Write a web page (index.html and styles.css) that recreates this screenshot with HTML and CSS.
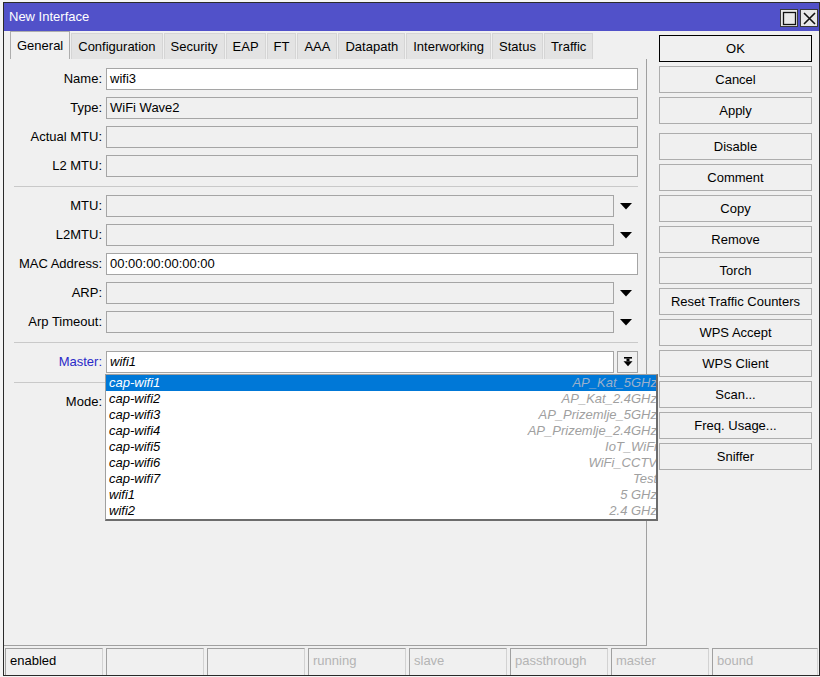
FILE: index.html
```html
<!DOCTYPE html>
<html lang="en">
<head>
  <meta charset="UTF-8">
  <title>New Interface</title>
  <link rel="stylesheet" href="styles.css">
</head>
<body>
  <div class="window">
    <div class="titlebar">
      <span class="title">New Interface</span>
      <div class="title-buttons">
        <span class="tbtn">
          <svg width="15" height="15" viewBox="0 0 15 15"><rect x="1.5" y="1.5" width="12" height="12" fill="none" stroke="#111" stroke-width="1.3"/></svg>
        </span>
        <span class="tbtn">
          <svg width="15" height="15" viewBox="0 0 15 15"><path d="M2 2 L13 13 M13 2 L2 13" stroke="#111" stroke-width="1.6"/></svg>
        </span>
      </div>
    </div>

    <div class="content">
      <div class="main">
        <div class="tabs">
          <span class="tab active">General</span>
          <span class="tab">Configuration</span>
          <span class="tab">Security</span>
          <span class="tab">EAP</span>
          <span class="tab">FT</span>
          <span class="tab">AAA</span>
          <span class="tab">Datapath</span>
          <span class="tab">Interworking</span>
          <span class="tab">Status</span>
          <span class="tab">Traffic</span>
        </div>

        <div class="panel">
          <div class="row"><label>Name:</label><div class="field white">wifi3</div></div>
          <div class="row"><label>Type:</label><div class="field">WiFi Wave2</div></div>
          <div class="row"><label>Actual MTU:</label><div class="field"></div></div>
          <div class="row"><label>L2 MTU:</label><div class="field"></div></div>
          <div class="sep"></div>

          <div class="row"><label>MTU:</label>
            <div class="combo"><div class="field"></div><span class="arrow"><svg width="12" height="7" viewBox="0 0 12 7"><path d="M0 0 H12 L6 6.5 Z"/></svg></span></div>
          </div>
          <div class="row"><label>L2MTU:</label>
            <div class="combo"><div class="field"></div><span class="arrow"><svg width="12" height="7" viewBox="0 0 12 7"><path d="M0 0 H12 L6 6.5 Z"/></svg></span></div>
          </div>
          <div class="row"><label>MAC Address:</label><div class="field white">00:00:00:00:00:00</div></div>
          <div class="row"><label>ARP:</label>
            <div class="combo"><div class="field"></div><span class="arrow"><svg width="12" height="7" viewBox="0 0 12 7"><path d="M0 0 H12 L6 6.5 Z"/></svg></span></div>
          </div>
          <div class="row"><label>Arp Timeout:</label>
            <div class="combo"><div class="field"></div><span class="arrow"><svg width="12" height="7" viewBox="0 0 12 7"><path d="M0 0 H12 L6 6.5 Z"/></svg></span></div>
          </div>
          <div class="sep"></div>

          <div class="row"><label class="link">Master:</label>
            <div class="combo open">
              <div class="field white italic">wifi1</div>
              <span class="drop-btn"><svg width="10" height="10" viewBox="0 0 10 10"><rect x="1" y="0" width="8" height="1.6"/><rect x="3.5" y="1.6" width="3" height="2.6"/><path d="M0.5 4.2 H9.5 L5 9.2 Z"/></svg></span>
              <ul class="dropdown">
                <li class="selected"><span>cap-wifi1</span><span class="ssid">AP_Kat_5GHz</span></li>
                <li><span>cap-wifi2</span><span class="ssid">AP_Kat_2.4GHz</span></li>
                <li><span>cap-wifi3</span><span class="ssid">AP_Prizemlje_5GHz</span></li>
                <li><span>cap-wifi4</span><span class="ssid">AP_Prizemlje_2.4GHz</span></li>
                <li><span>cap-wifi5</span><span class="ssid">IoT_WiFi</span></li>
                <li><span>cap-wifi6</span><span class="ssid">WiFi_CCTV</span></li>
                <li><span>cap-wifi7</span><span class="ssid">Test</span></li>
                <li><span>wifi1</span><span class="ssid">5 GHz</span></li>
                <li><span>wifi2</span><span class="ssid">2.4 GHz</span></li>
              </ul>
            </div>
          </div>
          <div class="sep"></div>

          <div class="row"><label>Mode:</label><div class="field"></div></div>
        </div>
      </div>

      <div class="actions">
        <button class="btn default">OK</button>
        <button class="btn">Cancel</button>
        <button class="btn">Apply</button>
        <button class="btn spaced">Disable</button>
        <button class="btn">Comment</button>
        <button class="btn">Copy</button>
        <button class="btn">Remove</button>
        <button class="btn">Torch</button>
        <button class="btn">Reset Traffic Counters</button>
        <button class="btn">WPS Accept</button>
        <button class="btn">WPS Client</button>
        <button class="btn">Scan...</button>
        <button class="btn">Freq. Usage...</button>
        <button class="btn">Sniffer</button>
      </div>
    </div>

    <div class="statusbar">
      <span class="cell on">enabled</span>
      <span class="cell"></span>
      <span class="cell"></span>
      <span class="cell">running</span>
      <span class="cell">slave</span>
      <span class="cell">passthrough</span>
      <span class="cell">master</span>
      <span class="cell">bound</span>
    </div>
  </div>
</body>
</html>
```

FILE: styles.css
```css
* {
  box-sizing: border-box;
}
body {
  margin: 0;
  padding-top: 2px;
  background: #f4f4f4;
  font-family: 'Liberation Sans', Arial, sans-serif;
  font-size: 13px;
  color: #000;
}
.window {
  margin-left: 3px;
  width: 817px;
  height: 674px;
  border: 1px solid #2a2a2a;
  background: #f0f0f0;
  display: flex;
  flex-direction: column;
}
.titlebar {
  height: 28px;
  flex: none;
  background: #5151c9;
  color: #fff;
  display: flex;
  justify-content: space-between;
  padding: 0 1px 0 5px;
}
.title {
  line-height: 28px;
}
.title-buttons {
  display: flex;
  gap: 2px;
  align-self: flex-end;
  margin-bottom: 4px;
}
.tbtn {
  width: 18px;
  height: 18px;
  background: #e8e8e8;
  border: 1px solid #3a3a3a;
  display: flex;
  align-items: center;
  justify-content: center;
}
.content {
  height: 615px;
  flex: none;
  display: flex;
}
.main {
  width: 643px;
  display: flex;
  flex-direction: column;
}
.tabs {
  height: 28px;
  display: flex;
  align-items: flex-end;
  padding-left: 6px;
}
.tab {
  height: 26px;
  line-height: 24px;
  padding: 1px 6px 0;
  margin-right: 1px;
  background: #e3e3e3;
  border: 1px solid #d5d5d5;
  border-bottom: none;
}
.tab.active {
  height: 28px;
  line-height: 26px;
  background: #f0f0f0;
  border-color: #adadad;
}
.panel {
  flex: 1;
  display: flex;
  flex-direction: column;
  border-right: 1px solid #a0a0a0;
  border-bottom: 1px solid #a0a0a0;
  padding: 9px 8px 0 0;
}
.row {
  display: grid;
  grid-template-columns: 98px 1fr;
  column-gap: 4px;
  height: 22px;
  flex: none;
  margin-bottom: 7px;
}
.row label {
  text-align: right;
  line-height: 22px;
  white-space: nowrap;
}
.row label.link {
  color: #2a2ac8;
}
.field {
  height: 22px;
  border: 1px solid #a5a5a5;
  background: #f0f0f0;
  padding: 0 3px;
  line-height: 20px;
}
.field.white {
  background: #fff;
}
.field.italic {
  font-style: italic;
}
.combo {
  display: flex;
  position: relative;
}
.combo .field {
  width: 508px;
}
.arrow {
  flex: 1;
  display: flex;
  align-items: center;
  justify-content: center;
}
.drop-btn {
  width: 21px;
  height: 22px;
  margin-left: 3px;
  border: 1px solid #a5a5a5;
  background: #f0f0f0;
  display: flex;
  align-items: center;
  justify-content: center;
}
.sep {
  height: 1px;
  flex: none;
  background: #c9c9c9;
  margin: 2px 0 8px 10px;
}
.dropdown {
  position: absolute;
  top: 23px;
  left: -1px;
  width: 553px;
  margin: 0;
  padding: 0;
  list-style: none;
  background: #fff;
  border-top: 1px solid #a0a0a0;
  border-left: 1px solid #a0a0a0;
  border-right: 2px solid #6c6c6c;
  border-bottom: 2px solid #6c6c6c;
  font-style: italic;
  z-index: 2;
}
.dropdown li {
  height: 16px;
  line-height: 16px;
  padding-left: 3px;
  display: flex;
  justify-content: space-between;
  overflow: hidden;
  white-space: nowrap;
}
.dropdown .ssid {
  color: #a0a0a0;
  margin-right: -1px;
}
.dropdown li.selected {
  background: #0078d7;
  color: #fff;
}
.dropdown li.selected .ssid {
  color: #9ab0cc;
}
.actions {
  width: 153px;
  margin-left: 12px;
  padding-top: 4px;
  display: flex;
  flex-direction: column;
  gap: 4px;
}
.btn {
  height: 27px;
  font-family: inherit;
  font-size: 13px;
  background: #f0f0f0;
  border: 1px solid #adadad;
  color: #000;
  padding: 0;
}
.btn.default {
  border-color: #000;
}
.btn.spaced {
  margin-top: 5px;
}
.statusbar {
  flex: 1;
  display: grid;
  grid-template-columns: repeat(7, 98px) 1fr;
  column-gap: 3px;
  padding: 2px 1px 0 1px;
}
.cell {
  border-top: 1px solid #a0a0a0;
  border-left: 1px solid #a0a0a0;
  border-right: 1px solid #d2d2d2;
  padding-left: 4px;
  line-height: 24px;
  color: #b4b4b4;
}
.cell.on {
  color: #000;
}
```
